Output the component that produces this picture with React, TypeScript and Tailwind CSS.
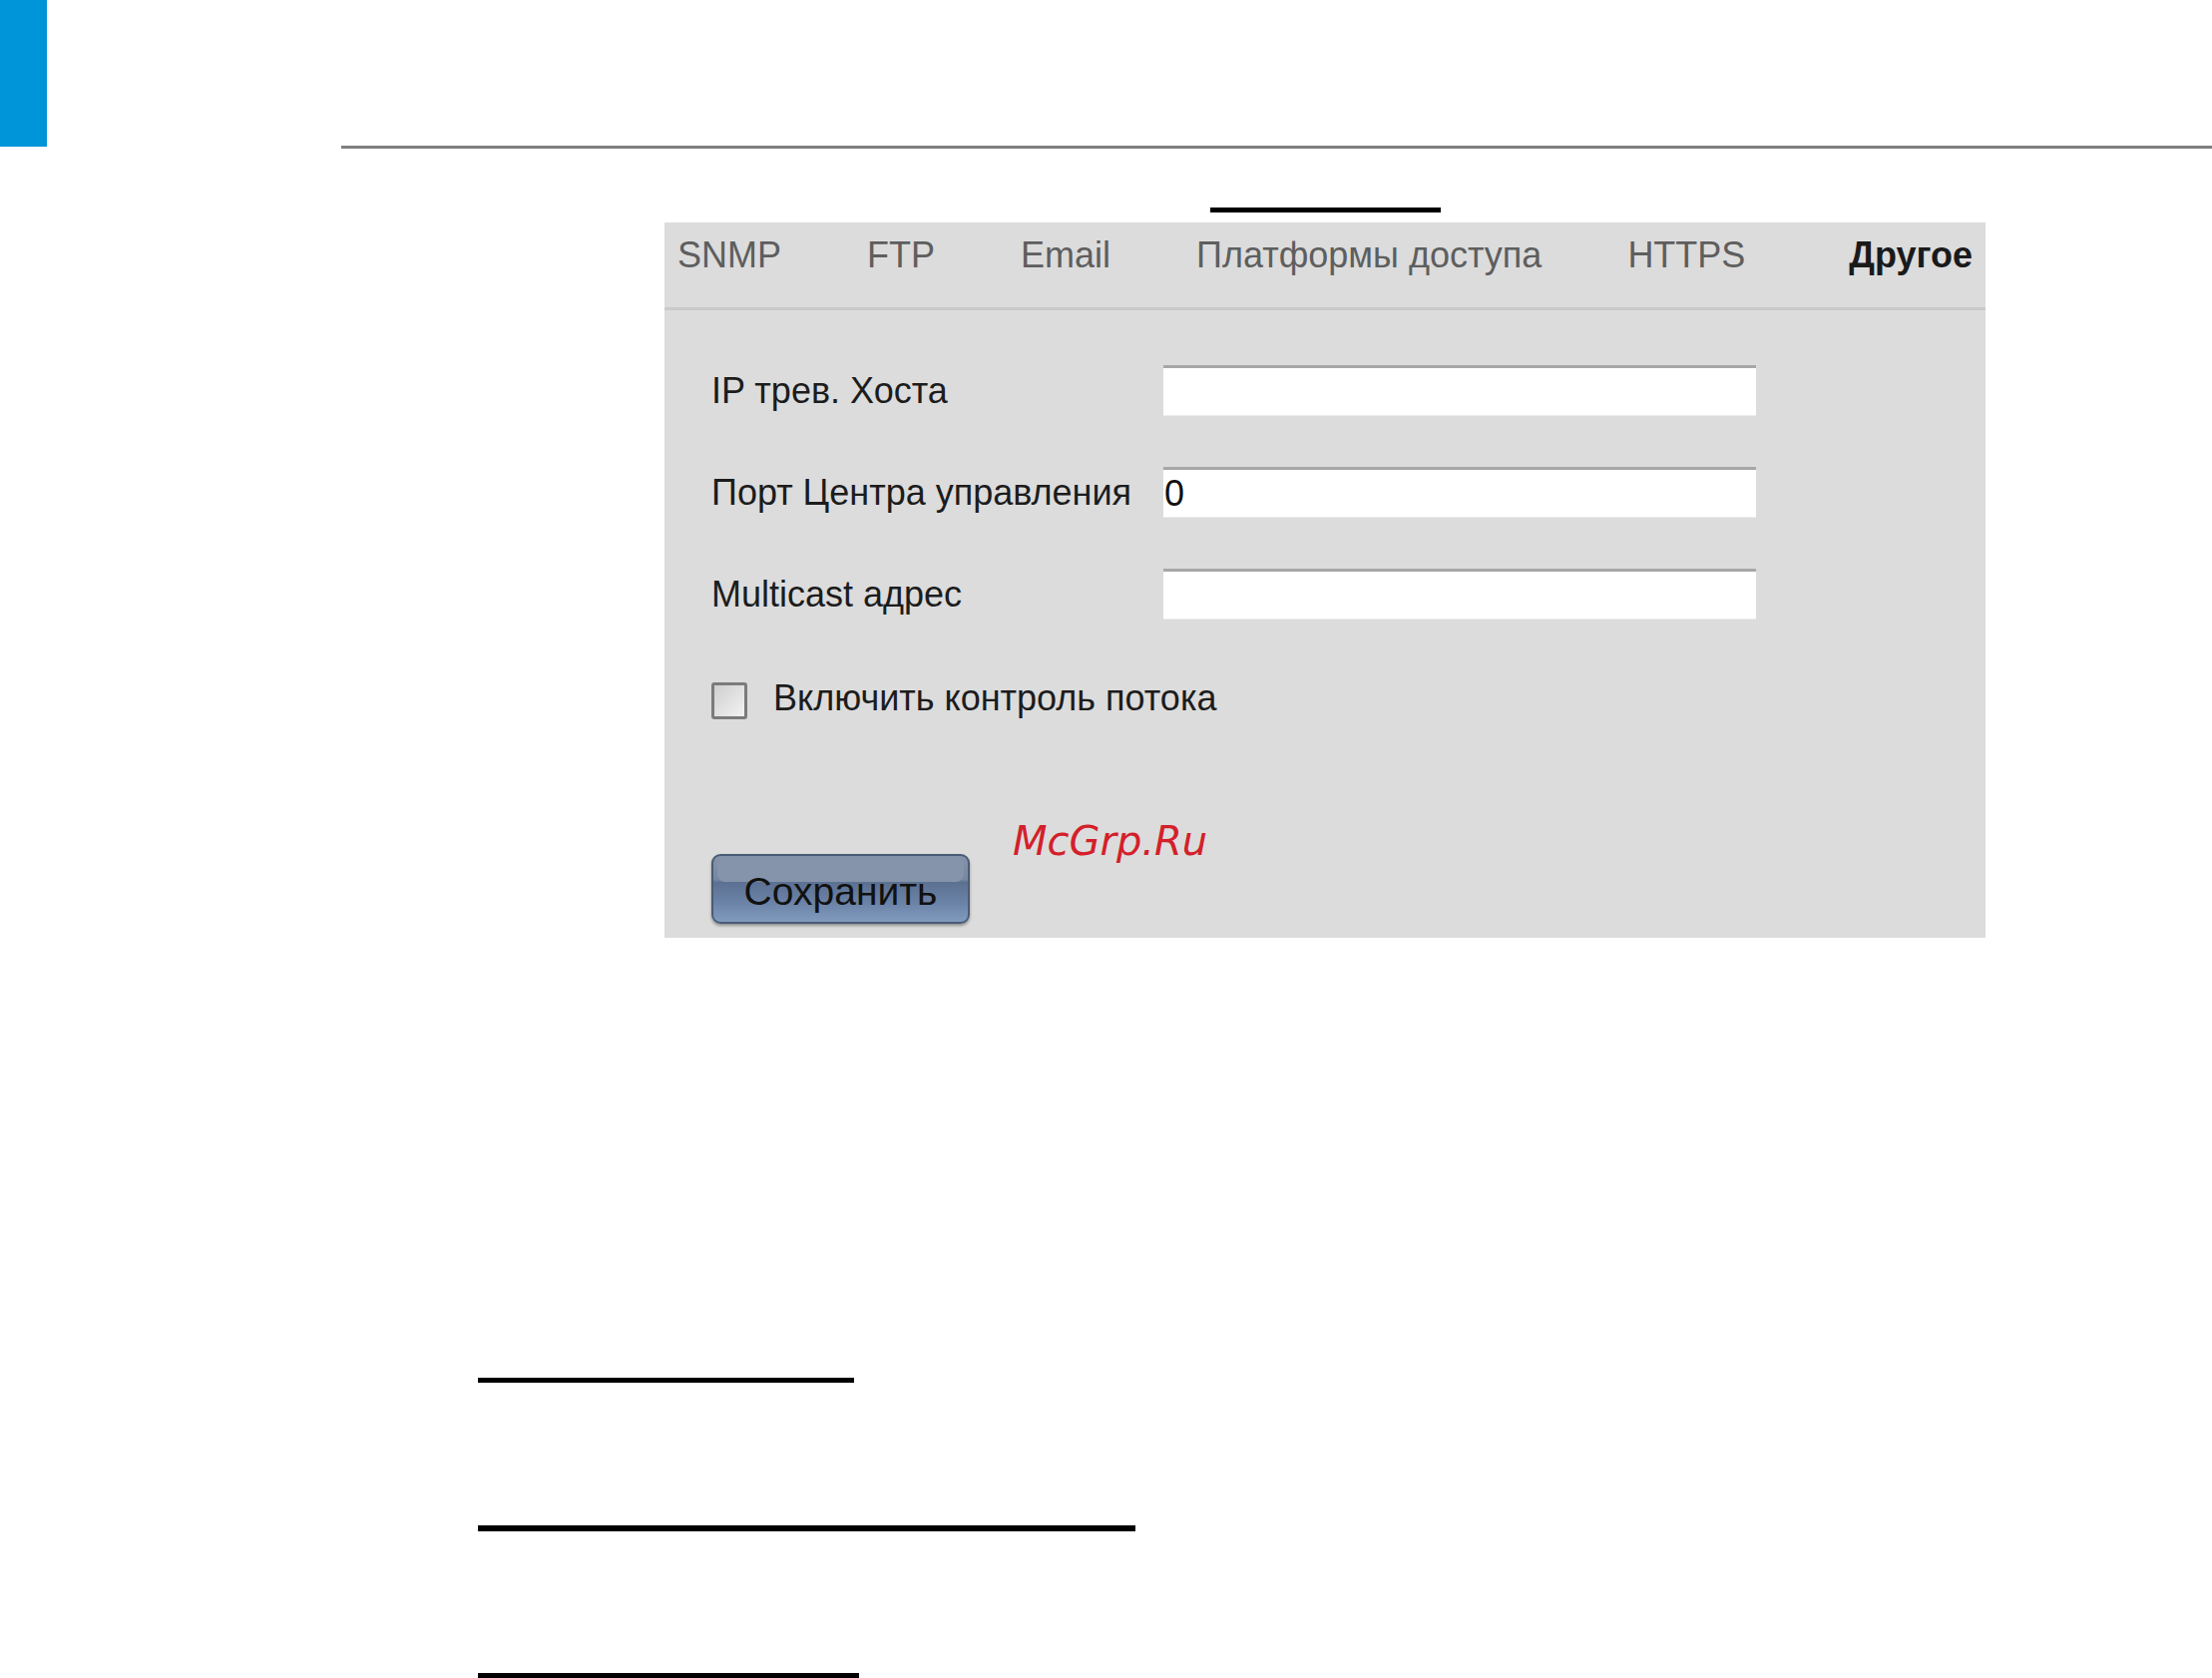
import React from "react";

const tabs = ["SNMP", "FTP", "Email", "Платформы доступа", "HTTPS"];

function Field({ label, value }: { label: string; value?: string }) {
  return (
    <div className="flex h-[51px] items-center">
      <div className="w-[453px] shrink-0 text-[36px] leading-[51px] text-[#1c1c1c] whitespace-nowrap">{label}</div>
      <div className="h-[51px] w-[594px] bg-white border-t-[3px] border-t-[#a7a7a7] border-b border-b-[#ececec] pl-[1px] text-[36px] leading-[47px] text-[#111]">
        {value ?? ""}
      </div>
    </div>
  );
}

export default function App() {
  return (
    <div
      className="relative w-[2217px] h-[1682px] overflow-hidden bg-white"
      style={{ fontFamily: '"Liberation Sans", Arial, sans-serif' }}
    >
      {/* header */}
      <div className="flex items-start">
        <div className="w-[47px] h-[147px] bg-[#0094d8] shrink-0" />
        <div className="w-[295px] shrink-0" />
        <div className="flex-1 h-[149px] border-b-[3px] border-[#7f7f7f]" />
      </div>

      {/* black mark above panel */}
      <div className="mt-[59px] ml-[1213px] w-[231px] h-[5px] bg-black" />

      {/* panel */}
      <div className="relative mt-[10px] ml-[666px] w-[1324px] h-[717px] bg-[#dcdcdc]">
        {/* tabs */}
        <div className="flex h-[88px] items-start border-b-[3px] border-[#c9c9c9] pt-[15px] pl-[13px] pr-[13px] text-[36px] leading-[36px]">
          <div className="flex gap-[86px] text-[#5e5e5e]">
            {tabs.map((t) => (
              <span key={t} className="whitespace-nowrap">{t}</span>
            ))}
          </div>
          <span className="ml-auto font-bold text-[#1a1a1a]">Другое</span>
        </div>

        {/* form */}
        <div className="pl-[47px] pt-[55px] flex flex-col">
          <div className="flex flex-col gap-[51px]">
            <Field label="IP трев. Хоста" />
            <Field label="Порт Центра управления" value="0" />
            <Field label="Multicast адрес" />
          </div>

          <div className="mt-[63px] flex items-center h-[37px]">
            <div className="w-[36px] h-[37px] rounded-[3px] border-[3px] border-[#7b7b7b] bg-[linear-gradient(135deg,#cfcfcf,#f2f2f2)] shrink-0" />
            <span className="ml-[26px] pb-[6px] text-[36px] leading-[37px] text-[#1c1c1c] whitespace-nowrap">Включить контроль потока</span>
          </div>

          <div className="mt-[135px]">
            <button className="relative w-[259px] h-[70px] rounded-[9px] border-2 border-[#4a5c76] bg-[linear-gradient(180deg,#8493a9_0%,#7787a0_36%,#5c7192_40%,#6a82a6_70%,#819bbf_100%)] shadow-[0_2px_3px_rgba(0,0,0,0.35)] pt-[6px] text-[39px] leading-[60px] text-[#111] text-center">
              <span className="absolute left-[4px] right-[4px] top-[2px] h-[24px] rounded-[8px] bg-[#8594aa]" />
              <span className="relative">Сохранить</span>
            </button>
          </div>
        </div>

        {/* watermark */}
        <div
          className="absolute left-[349px] top-[600px] text-[40px] leading-[40px] italic text-[#d3202a] whitespace-nowrap"
          style={{ fontFamily: '"DejaVu Sans", sans-serif' }}
        >
          McGrp.Ru
        </div>
      </div>

      {/* bottom lines */}
      <div className="mt-[441px] ml-[479px] w-[377px] h-[5px] bg-black" />
      <div className="mt-[143px] ml-[479px] w-[659px] h-[6px] bg-black" />
      <div className="mt-[142px] ml-[479px] w-[382px] h-[5px] bg-black" />
    </div>
  );
}
